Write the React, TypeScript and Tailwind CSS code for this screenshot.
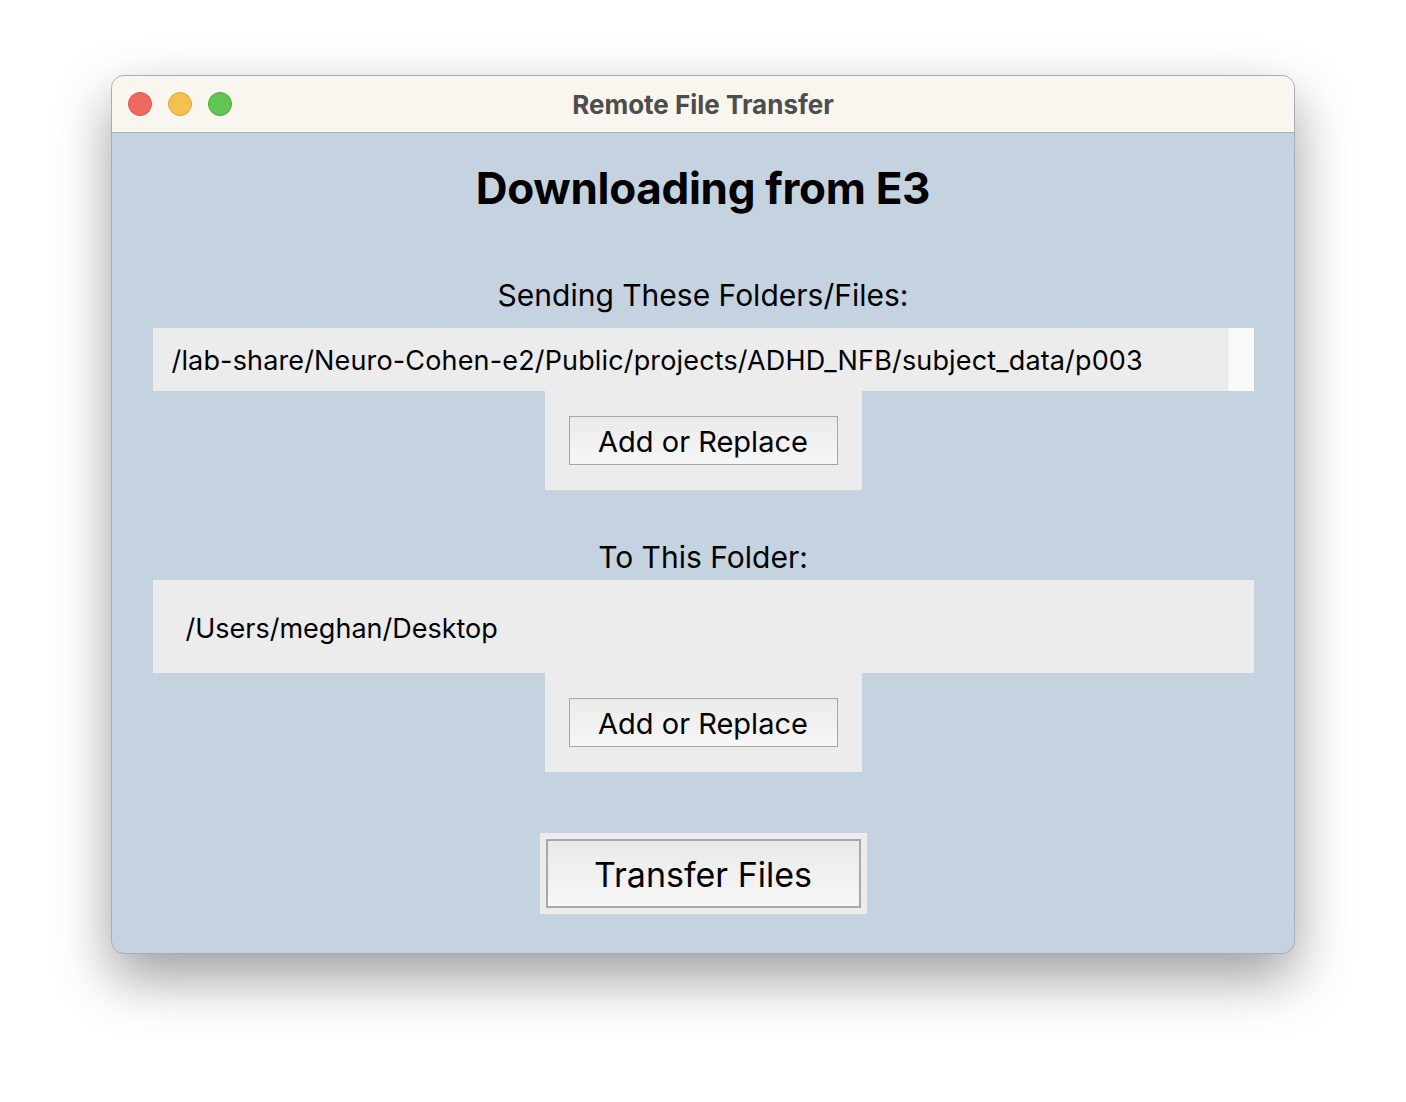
const FONT = "font-['Inter','Noto_Sans',sans-serif]";

function TrafficLights() {
  return (
    <div className="flex items-center gap-[16px] pl-[16px]">
      <span className="h-[24px] w-[24px] rounded-full border border-[#d9534a] bg-[#ee6a5f]" />
      <span className="h-[24px] w-[24px] rounded-full border border-[#d9a73d] bg-[#f6c04f]" />
      <span className="h-[24px] w-[24px] rounded-full border border-[#4aa83d] bg-[#61c554]" />
    </div>
  );
}

function ReplaceButton() {
  return (
    <div className="mx-auto flex h-[99px] w-[317px] justify-center bg-[#ececec] pt-[25px]">
      <button className="h-[49px] w-[269px] border-[1.5px] border-[#a6a6a6] bg-gradient-to-b from-[#eaeaea] to-[#f7f7f7] pt-[2px] text-[29px] leading-none text-black">
        Add or Replace
      </button>
    </div>
  );
}

export default function App() {
  return (
    <div className={`h-[1102px] w-[1406px] bg-white pl-[111px] pt-[75px] ${FONT}`}>
      <div className="h-[879px] w-[1184px] overflow-hidden rounded-[13px] border border-[#a9adb2] bg-[#c5d3e0] shadow-[0_24px_55px_rgba(0,0,0,0.38)]">
        {/* title bar */}
        <div className="relative flex h-[57px] items-center border-b border-[#a9b2bc] bg-[#f9f6f0]">
          <TrafficLights />
          <div className="absolute inset-0 flex items-center justify-center text-[26px] font-bold text-[#4d4d4d]">
            Remote File Transfer
          </div>
        </div>

        {/* body */}
        <div className="flex flex-col">
          <div className="flex h-[110px] items-center justify-center text-[44px] font-bold tracking-[-0.3px] text-black">
            Downloading from E3
          </div>

          <div className="mt-[35px] h-[34px] text-center text-[30px] leading-[34px] text-black">
            Sending These Folders/Files:
          </div>

          <div className="mx-auto mt-[16px] flex h-[63px] w-[1101px] bg-[#ececec]">
            <div className="flex flex-1 items-center pl-[19px] pt-[3px] text-[27px] tracking-[0.15px] text-black">
              /lab-share/Neuro-Cohen-e2/Public/projects/ADHD_NFB/subject_data/p003
            </div>
            <div className="w-[27px] border-l border-[#e4e4e4] bg-[#f9f9f9]" />
          </div>
          <ReplaceButton />

          <div className="mt-[50px] h-[34px] text-center text-[30px] leading-[34px] text-black">
            To This Folder:
          </div>

          <div className="mx-auto mt-[6px] flex h-[93px] w-[1101px] items-center bg-[#ececec] pl-[33px] pt-[6px] text-[27px] text-black">
            /Users/meghan/Desktop
          </div>
          <ReplaceButton />

          <div className="mx-auto mt-[61px] flex h-[81px] w-[327px] items-center justify-center bg-[#ececec]">
            <button className="h-[69px] w-[315px] border-2 border-[#a8a8a8] bg-gradient-to-b from-[#e9e9e9] to-[#f7f7f7] pt-[2px] text-[34px] leading-none text-black">
              Transfer Files
            </button>
          </div>
        </div>
      </div>
    </div>
  );
}
